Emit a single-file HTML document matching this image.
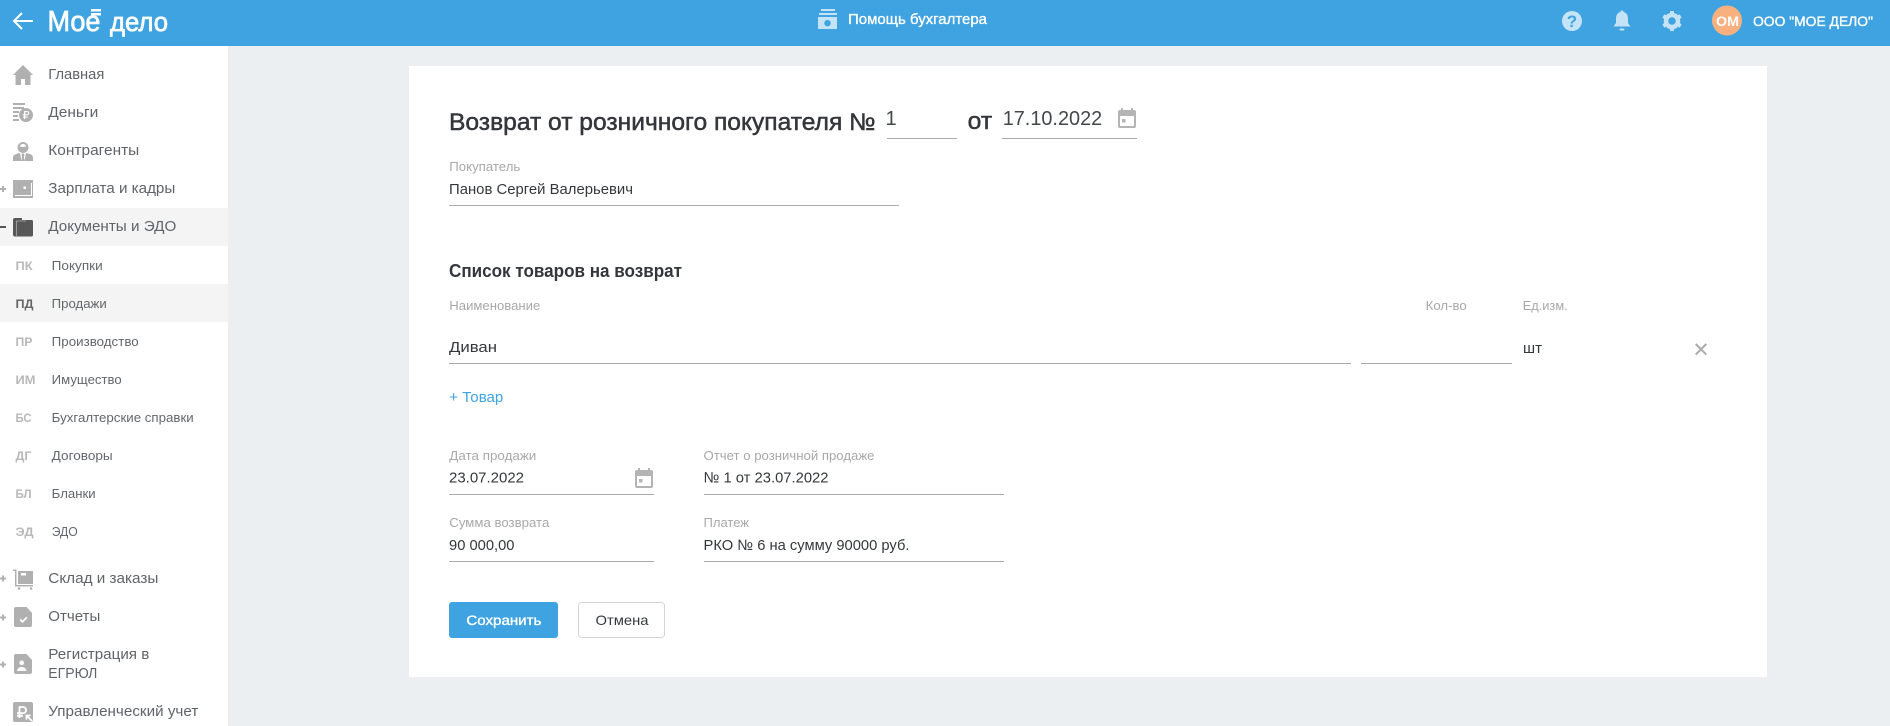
<!DOCTYPE html>
<html lang="ru"><head><meta charset="utf-8"><title>Возврат от розничного покупателя</title>
<style>
html,body{margin:0;padding:0;width:1890px;height:726px;overflow:hidden;background:#eceff2}
svg{display:block}
text{font-family:"Liberation Sans",sans-serif;white-space:pre}
.n{font-size:15px;fill:#5f6468}
.s{font-size:13px;fill:#63676b}
.c{font-size:12px;font-weight:bold;fill:#b8b8b8}
.l{font-size:13px;fill:#a8a8a8}
.v{font-size:15px;fill:#35383b}
.m{stroke:currentColor;stroke-width:.35px}
</style></head><body>
<svg width="1890" height="726" viewBox="0 0 1890 726" xmlns="http://www.w3.org/2000/svg">
<rect width="1890" height="726" fill="#eceff2"/>
<rect x="0" y="46" width="228" height="680" fill="#fff"/>
<rect x="0" y="0" width="1890" height="46" fill="#3ea3e0"/>
<!-- header -->
<path d="M33 21H14M22 13L14 21L22 29" fill="none" stroke="#fff" stroke-width="2"/>
<text x="47.5" y="31" font-size="29" fill="#fff" stroke="#fff" stroke-width=".7" textLength="53" lengthAdjust="spacingAndGlyphs">Мое</text>
<rect x="91" y="9" width="10" height="2.5" fill="#fff"/><rect x="91" y="13" width="10" height="2.5" fill="#fff"/>
<text x="110" y="31" font-size="27" fill="#fff" stroke="#fff" stroke-width=".7" textLength="58" lengthAdjust="spacingAndGlyphs">дело</text>
<g fill="#c5e3f7"><rect x="821" y="9" width="14" height="2"/><rect x="819" y="13" width="18" height="2"/><path d="M818 17h19v12h-19zM827.500 20a3.200 3.200 0 1 0 .01 0z" fill-rule="evenodd"/></g>
<text x="848" y="24" font-size="15" fill="#fff" class="m" color="#fff" textLength="139" lengthAdjust="spacingAndGlyphs">Помощь бухгалтера</text>
<circle cx="1572" cy="21" r="10" fill="#c5e3f7"/>
<text x="1572" y="27" font-size="17" font-weight="bold" fill="#3ea3e0" text-anchor="middle">?</text>
<path d="M1622 10.500c1 0 1.700.700 1.700 1.500 3 .900 4.300 3.400 4.300 6.500v4.500l2.500 3.500h-17l2.500-3.500v-4.500c0-3.100 1.300-5.600 4.300-6.500 0-.800.700-1.500 1.700-1.500z" fill="#c5e3f7"/><rect x="1619.500" y="28.500" width="5" height="2" rx="1" fill="#c5e3f7"/>
<g fill="#c5e3f7"><circle cx="1672" cy="21" r="6" fill="none" stroke="#c5e3f7" stroke-width="4.500"/>
<rect x="1670" y="11" width="4" height="4" rx=".5"/><rect x="1670" y="11" width="4" height="4" rx=".5" transform="rotate(60 1672 21)"/><rect x="1670" y="11" width="4" height="4" rx=".5" transform="rotate(120 1672 21)"/><rect x="1670" y="11" width="4" height="4" rx=".5" transform="rotate(180 1672 21)"/><rect x="1670" y="11" width="4" height="4" rx=".5" transform="rotate(240 1672 21)"/><rect x="1670" y="11" width="4" height="4" rx=".5" transform="rotate(300 1672 21)"/></g>
<circle cx="1727" cy="20.500" r="15" fill="#f9b07f"/>
<text x="1716" y="26" font-size="14" font-weight="bold" fill="#fff" textLength="23" lengthAdjust="spacingAndGlyphs">ОМ</text>
<text x="1753" y="26" font-size="14" fill="#fff" class="m" color="#fff" textLength="120" lengthAdjust="spacingAndGlyphs">ООО "МОЕ ДЕЛО"</text>
<!-- active rows -->
<rect x="0" y="208" width="228" height="38" fill="#f4f4f4"/>
<rect x="0" y="284" width="228" height="38" fill="#f4f4f4"/>
<!-- icons -->
<g fill="#b0b0b0">
<path d="M23 65l10 10h-2.500v10h-5.500v-6h-4v6h-5.500V75H13z"/>
<path d="M13 103h12v2H13zM13 107h11v2H13zM13 111h6v2h-6zM13 115h5v2h-5zM13 119h6v2h-6z"/>
<path fill-rule="evenodd" d="M26 108a7 7 0 1 0 .01 0zM24 111h3a2.200 2.200 0 0 1 0 4.400h-1.700v1.100h2.400v1.100h-2.400v1.400H24v-1.400h-1v-1.100h1v-1.100h-1v-1.100h1zM25.300 112.100v2.200H27a1.100 1.100 0 0 0 0-2.200z"/>
<path fill-rule="evenodd" d="M23 142a5.500 5.500 0 1 0 .01 0zM23 144a3.500 3.500 0 0 0-3.300 2.400c2 .800 4.600.800 6.600 0A3.500 3.500 0 0 0 23 144z"/>
<path d="M13 161v-3.500c0-2.500 2-3.500 7-4.500l1.500 8zM33 161v-3.500c0-2.500-2-3.500-7-4.500l-1.500 8zM22 153.500h2l.5 2-.5 1 .5 4.500h-3l.5-4.500-.5-1z"/>
<rect x="13" y="180" width="20" height="18"/>
<path d="M31.500 183v12.500H15" fill="none" stroke="#fff" stroke-width="1"/>
<rect x="23.500" y="186.500" width="2.500" height="2.500" fill="#fff"/>
<path d="M18 571h15v13H18z"/><rect x="21" y="573" width="5" height="2.500" fill="#fff"/>
<path d="M13 569.500h3.500v15.500h16.500v1.500H15v-15.500h-2z"/><circle cx="19" cy="588.500" r="1.300"/><circle cx="31" cy="588.500" r="1.300"/>
<path fill-rule="evenodd" d="M16 607h10.500l5.500 6v12a2 2 0 0 1-2 2H16a2 2 0 0 1-2-2V609a2 2 0 0 1 2-2zM19.500 620l1.200-1.200 1.800 1.800 3.800-3.800 1.200 1.200-5 5z"/>
<path fill-rule="evenodd" d="M16 654h10.500l5.500 6v12a2 2 0 0 1-2 2H16a2 2 0 0 1-2-2V656a2 2 0 0 1 2-2zM21.700 660.500a2.300 2.300 0 1 0 .01 0zM17 671c0-2.300 2-4 4.700-4s4.700 1.700 4.700 4z"/>
<rect x="13" y="702" width="20" height="20" rx="2"/>
<path d="M19.500 718V707h3.500a3.100 3.100 0 0 1 0 6.200h-6M17 715.800h6" fill="none" stroke="#fff" stroke-width="1.800"/>
<path d="M32 721l-5-5M26.500 719.500v-4h4" fill="none" stroke="#fff" stroke-width="1.800"/>
<rect x="0" y="188" width="6" height="2"/><rect x="2" y="186" width="2" height="6"/>
<rect x="0" y="577.500" width="6" height="2"/><rect x="2" y="575.500" width="2" height="6"/>
<rect x="0" y="616.500" width="6" height="2"/><rect x="2" y="614.500" width="2" height="6"/>
<rect x="0" y="663.500" width="6" height="2"/><rect x="2" y="661.500" width="2" height="6"/>
</g>
<rect x="0" y="226" width="6" height="2" fill="#555"/>
<path d="M15 218h7v2h9.500a1.500 1.500 0 0 1 1.500 1.500V235a1.500 1.500 0 0 1-1.500 1.500H15a2 2 0 0 1-2-2V220a2 2 0 0 1 2-2z" fill="#585858"/><path d="M16.500 236v-15H26" fill="none" stroke="#aaa" stroke-width=".8"/>
<!-- sidebar -->
<text class="n" x="48.300" y="79" textLength="56" lengthAdjust="spacingAndGlyphs">Главная</text>
<text class="n" x="48.300" y="117" textLength="50" lengthAdjust="spacingAndGlyphs">Деньги</text>
<text class="n" x="48.300" y="155" textLength="91" lengthAdjust="spacingAndGlyphs">Контрагенты</text>
<text class="n" x="48.300" y="193" textLength="127" lengthAdjust="spacingAndGlyphs">Зарплата и кадры</text>
<text class="n" x="48.300" y="231" textLength="128" lengthAdjust="spacingAndGlyphs">Документы и ЭДО</text>
<text class="c" x="15.500" y="270" textLength="17" lengthAdjust="spacingAndGlyphs">ПК</text><text class="s" x="51.700" y="270" textLength="51" lengthAdjust="spacingAndGlyphs">Покупки</text>
<text class="c" x="15.500" y="308" textLength="18" lengthAdjust="spacingAndGlyphs" style="fill:#666">ПД</text><text class="s" x="51.700" y="308" textLength="55" lengthAdjust="spacingAndGlyphs">Продажи</text>
<text class="c" x="15.500" y="346" textLength="17" lengthAdjust="spacingAndGlyphs">ПР</text><text class="s" x="51.700" y="346" textLength="87" lengthAdjust="spacingAndGlyphs">Производство</text>
<text class="c" x="15.500" y="384" textLength="20" lengthAdjust="spacingAndGlyphs">ИМ</text><text class="s" x="51.700" y="384" textLength="70" lengthAdjust="spacingAndGlyphs">Имущество</text>
<text class="c" x="15.500" y="422" textLength="16" lengthAdjust="spacingAndGlyphs">БС</text><text class="s" x="51.700" y="422" textLength="142" lengthAdjust="spacingAndGlyphs">Бухгалтерские справки</text>
<text class="c" x="15.500" y="460" textLength="16" lengthAdjust="spacingAndGlyphs">ДГ</text><text class="s" x="51.700" y="460" textLength="61" lengthAdjust="spacingAndGlyphs">Договоры</text>
<text class="c" x="15.500" y="498" textLength="16" lengthAdjust="spacingAndGlyphs">БЛ</text><text class="s" x="51.700" y="498" textLength="44" lengthAdjust="spacingAndGlyphs">Бланки</text>
<text class="c" x="15.500" y="536" textLength="18" lengthAdjust="spacingAndGlyphs">ЭД</text><text class="s" x="51.700" y="536" textLength="26" lengthAdjust="spacingAndGlyphs">ЭДО</text>
<text class="n" x="48.300" y="583" textLength="110" lengthAdjust="spacingAndGlyphs">Склад и заказы</text>
<text class="n" x="48.300" y="621" textLength="52" lengthAdjust="spacingAndGlyphs">Отчеты</text>
<text class="n" x="48.300" y="659" textLength="101" lengthAdjust="spacingAndGlyphs">Регистрация в</text>
<text class="n" x="48.300" y="678" textLength="49" lengthAdjust="spacingAndGlyphs">ЕГРЮЛ</text>
<text class="n" x="48.300" y="716" textLength="150" lengthAdjust="spacingAndGlyphs">Управленческий учет</text>
<!-- card -->
<rect x="409" y="66" width="1358" height="611" fill="#fff"/>
<text x="449" y="130" font-size="24" fill="#33363a" stroke="#33363a" stroke-width=".5" textLength="426.500" lengthAdjust="spacingAndGlyphs">Возврат от розничного покупателя №</text>
<text x="885.500" y="125" font-size="20" fill="#44474a">1</text>
<rect x="887" y="138" width="70" height="1" fill="#aaa"/>
<text x="967.700" y="129" font-size="24" fill="#33363a" stroke="#33363a" stroke-width=".5" textLength="24.500" lengthAdjust="spacingAndGlyphs">от</text>
<text x="1002.700" y="125" font-size="20" fill="#44474a" textLength="99.500" lengthAdjust="spacingAndGlyphs">17.10.2022</text>
<rect x="1002" y="138" width="135" height="1" fill="#aaa"/>
<g fill="#b4b4b4"><path fill-rule="evenodd" d="M1120 110h14a2 2 0 0 1 2 2v14a2 2 0 0 1-2 2h-14a2 2 0 0 1-2-2v-14a2 2 0 0 1 2-2zM1120 116v10h14v-10z"/><rect x="1121" y="108" width="2" height="4"/><rect x="1131" y="108" width="2" height="4"/><rect x="1122" y="119" width="3.500" height="3.500"/></g>
<text class="l" x="449.300" y="171" textLength="71" lengthAdjust="spacingAndGlyphs">Покупатель</text>
<text class="v" x="449" y="194" textLength="184" lengthAdjust="spacingAndGlyphs">Панов Сергей Валерьевич</text>
<rect x="449" y="205" width="450" height="1" fill="#aaa"/>
<text x="449" y="277" font-size="18" font-weight="bold" fill="#33363a" textLength="233" lengthAdjust="spacingAndGlyphs">Список товаров на возврат</text>
<text class="l" x="449.300" y="310" textLength="91" lengthAdjust="spacingAndGlyphs">Наименование</text>
<text class="l" x="1425.700" y="310" textLength="41" lengthAdjust="spacingAndGlyphs">Кол-во</text>
<text class="l" x="1522.700" y="310" textLength="45" lengthAdjust="spacingAndGlyphs">Ед.изм.</text>
<text class="v" x="449" y="352" textLength="48" lengthAdjust="spacingAndGlyphs">Диван</text>
<rect x="449" y="363" width="902" height="1" fill="#aaa"/>
<rect x="1361" y="363" width="151" height="1" fill="#aaa"/>
<text class="v" x="1523" y="353" textLength="19" lengthAdjust="spacingAndGlyphs">шт</text>
<path d="M1695.700 344l10.600 10.600M1706.300 344l-10.600 10.600" stroke="#aaa" stroke-width="2" fill="none"/>
<text x="449.300" y="402" font-size="15" fill="#3ea3e0" textLength="54" lengthAdjust="spacingAndGlyphs">+ Товар</text>
<text class="l" x="449.300" y="460" textLength="87" lengthAdjust="spacingAndGlyphs">Дата продажи</text>
<text class="v" x="449" y="482.500" textLength="75" lengthAdjust="spacingAndGlyphs">23.07.2022</text>
<rect x="449" y="494" width="205" height="1" fill="#aaa"/>
<g fill="#b4b4b4"><path fill-rule="evenodd" d="M637 470h14a2 2 0 0 1 2 2v14a2 2 0 0 1-2 2h-14a2 2 0 0 1-2-2v-14a2 2 0 0 1 2-2zM637 476v10h14v-10z"/><rect x="638" y="468" width="2" height="4"/><rect x="648" y="468" width="2" height="4"/><rect x="639" y="479" width="3.500" height="3.500"/></g>
<text class="l" x="703.500" y="460" textLength="171" lengthAdjust="spacingAndGlyphs">Отчет о розничной продаже</text>
<text class="v" x="703.500" y="482.500" textLength="125" lengthAdjust="spacingAndGlyphs">№ 1 от 23.07.2022</text>
<rect x="704" y="494" width="300" height="1" fill="#aaa"/>
<text class="l" x="449.300" y="527" textLength="100" lengthAdjust="spacingAndGlyphs">Сумма возврата</text>
<text class="v" x="449" y="550" textLength="65.500" lengthAdjust="spacingAndGlyphs">90 000,00</text>
<rect x="449" y="561" width="205" height="1" fill="#aaa"/>
<text class="l" x="703.500" y="527" textLength="45.500" lengthAdjust="spacingAndGlyphs">Платеж</text>
<text class="v" x="703.500" y="550" textLength="206" lengthAdjust="spacingAndGlyphs">РКО № 6 на сумму 90000 руб.</text>
<rect x="704" y="561" width="300" height="1" fill="#aaa"/>
<rect x="449" y="602" width="109" height="36" rx="3" fill="#3ea3e0"/>
<text x="466.400" y="625" font-size="14" fill="#fff" class="m" color="#fff" textLength="75" lengthAdjust="spacingAndGlyphs">Сохранить</text>
<rect x="578.500" y="602.500" width="86" height="35" rx="3" fill="#fff" stroke="#d4d4d4"/>
<text x="595.500" y="625" font-size="14" fill="#35383b" textLength="53" lengthAdjust="spacingAndGlyphs">Отмена</text>
</svg>
</body></html>
